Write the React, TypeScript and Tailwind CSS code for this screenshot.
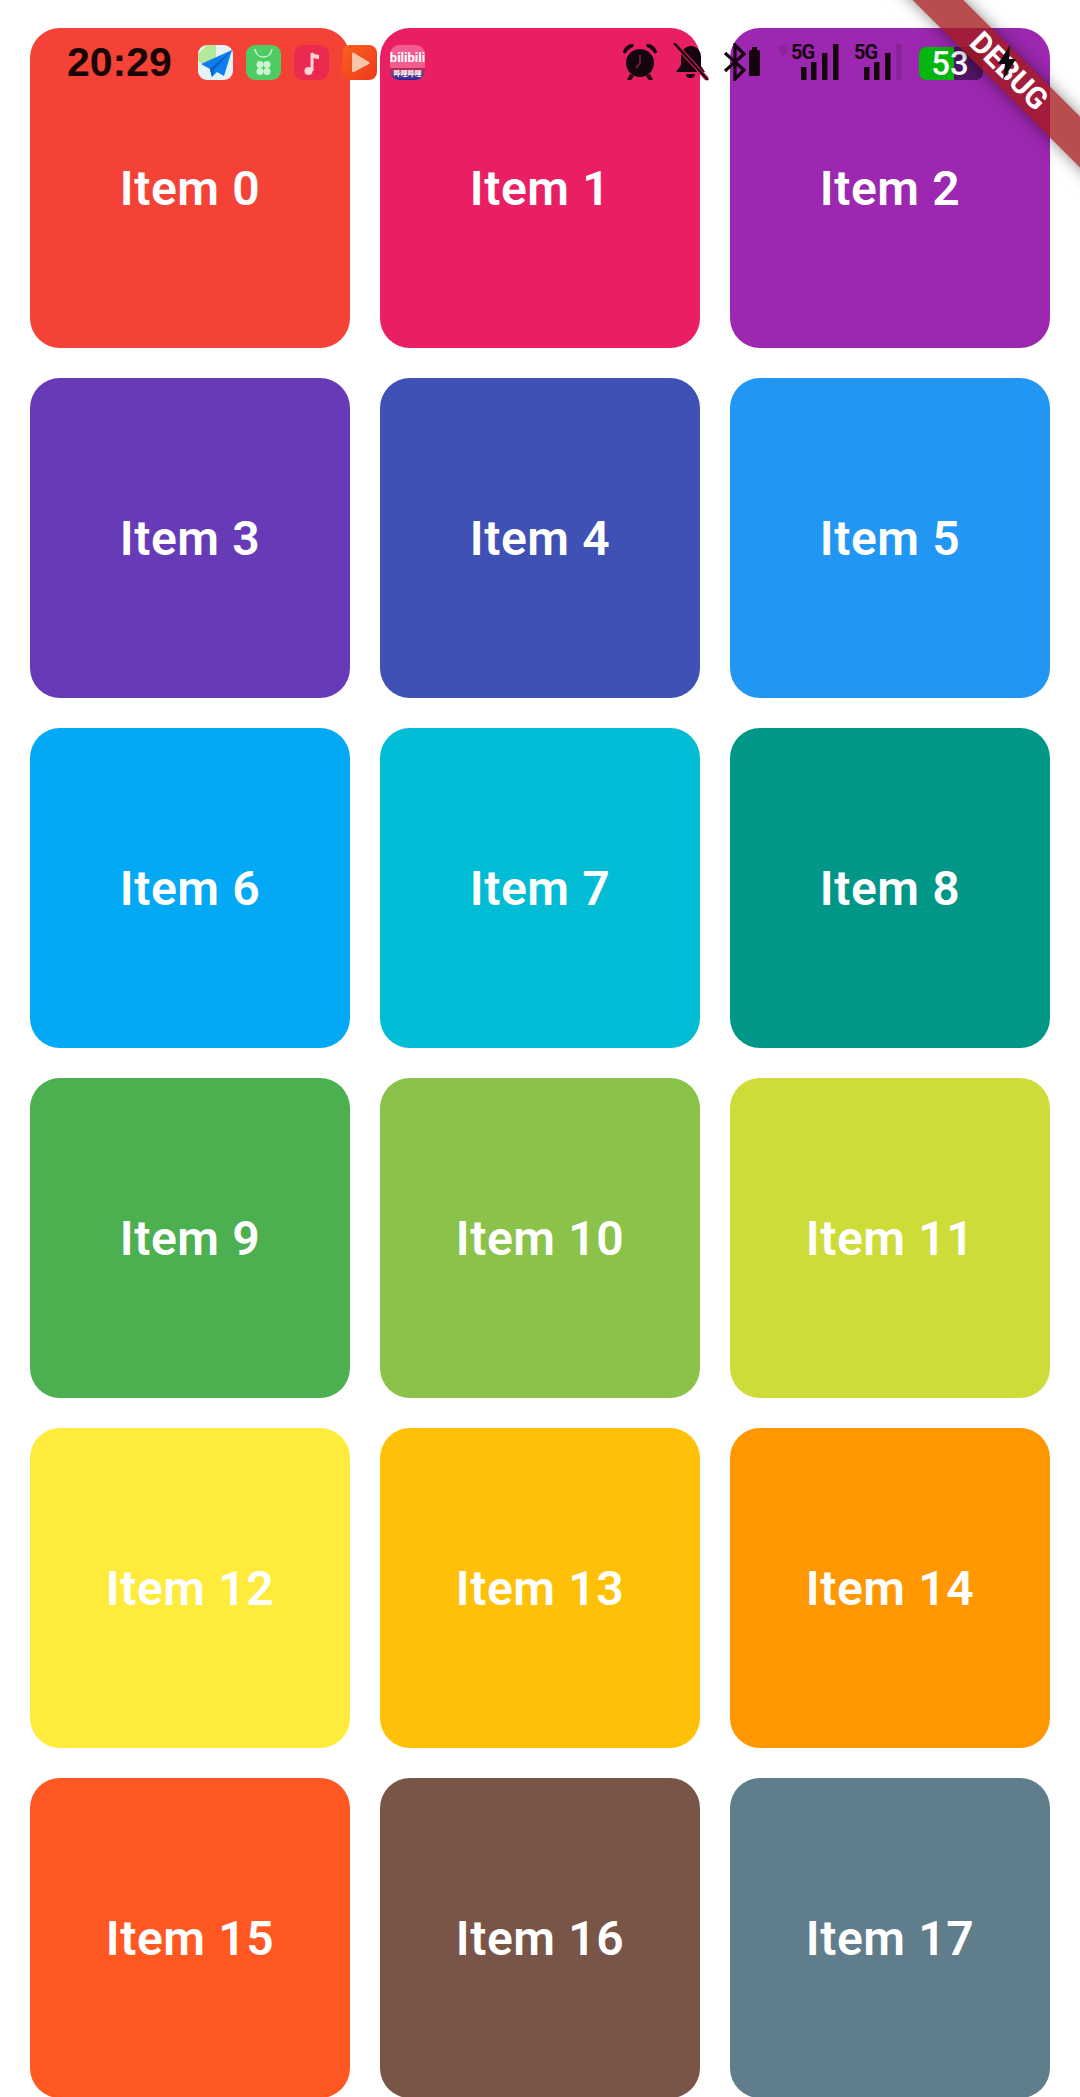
import React from 'react';

const items = [
  'bg-[#f44336]', 'bg-[#e91e63]', 'bg-[#9c27b0]',
  'bg-[#673ab7]', 'bg-[#3f51b5]', 'bg-[#2196f3]',
  'bg-[#03a9f4]', 'bg-[#00bcd4]', 'bg-[#009688]',
  'bg-[#4caf50]', 'bg-[#8bc34a]', 'bg-[#cddc39]',
  'bg-[#ffeb3b]', 'bg-[#ffc107]', 'bg-[#ff9800]',
  'bg-[#ff5722]', 'bg-[#795548]', 'bg-[#607d8b]',
];

const ink = '#16040f';

function MapsIcon() {
  return (
    <svg width="35" height="35" viewBox="0 0 35 35">
      <rect width="35" height="35" rx="9" fill="#e4f3f6" />
      <path d="M0 9 9 0h9v14L6 20 0 16z" fill="#b5e89a" />
      <path d="M34 5 3 19l9 5 2 8 5-5 7 4z" fill="#0f7ff0" />
      <path d="M34 5 12 24l2 8 2-7z" fill="#0a5fc4" />
    </svg>
  );
}

function StoreIcon() {
  return (
    <svg width="35" height="35" viewBox="0 0 35 35">
      <rect width="35" height="35" rx="9" fill="#4fcb63" />
      <path d="M9 4c1 6 4 8 8.500 8S25 10 26 4" fill="none" stroke="#c9f5cf" strokeWidth="1.500" />
      <circle cx="14" cy="19.500" r="3.500" fill="#c9f5cf" />
      <circle cx="21" cy="19.500" r="3.500" fill="#c9f5cf" />
      <circle cx="14" cy="26.500" r="3.500" fill="#c9f5cf" />
      <circle cx="21" cy="26.500" r="3.500" fill="#c9f5cf" />
    </svg>
  );
}

function MusicIcon() {
  return (
    <svg width="35" height="35" viewBox="0 0 35 35">
      <rect width="35" height="35" rx="9" fill="#ea2a50" />
      <path d="M18 8v18" stroke="#ffd5d8" strokeWidth="3" />
      <path d="M18 7c2 3 5 2 7 3v4c-3 0-5-1-7-2z" fill="#ffd5d8" />
      <circle cx="14.500" cy="26" r="4" fill="#ffd5d8" />
    </svg>
  );
}

function VideoIcon() {
  return (
    <svg width="35" height="35" viewBox="0 0 35 35">
      <defs>
        <linearGradient id="videoBg" x1="0" y1="0" x2="1" y2="1">
          <stop offset="0" stopColor="#f8601f" />
          <stop offset="1" stopColor="#ee3a1c" />
        </linearGradient>
      </defs>
      <rect width="35" height="35" rx="8" fill="url(#videoBg)" />
      <path d="M10 9c0-1 1-2 2-1l15 9c1 .5 1 1.500 0 2l-15 8c-1 .5-2 0-2-1z" fill="#fcc4a8" />
    </svg>
  );
}

function BiliIcon() {
  return (
    <div className="relative flex h-[35px] w-[35px] flex-col items-center overflow-hidden rounded-[9px] bg-[#f25d8e]">
      <span className="mt-[6px] text-[13px] leading-[14px] font-bold text-white font-['Roboto',sans-serif]">bilibili</span>
      <div className="absolute right-0 bottom-0 left-0 flex h-[12px] items-center justify-center bg-gradient-to-b from-[#c81f50] to-[#2020a0]">
        <span className="text-[7px] leading-none font-bold text-white font-['Noto_Sans_CJK_SC',sans-serif]">哔哩哔哩</span>
      </div>
    </div>
  );
}

function AlarmIcon() {
  return (
    <svg width="36" height="38" viewBox="0 0 36 38">
      <circle cx="18" cy="20" r="14" fill={ink} />
      <path d="M18 12v8l-4 5" fill="none" stroke="#8c1c40" strokeWidth="1.500" />
      <path d="M1 9c1-5 5-8 10-8 1 0 1 2 0 3-3 1-6 4-7 6-1 1-3 0-3-1zM35 9c-1-5-5-8-10-8-1 0-1 2 0 3 3 1 6 4 7 6 1 1 3 0 3-1z" fill={ink} />
      <path d="M8 31 5 37h4l3-4zM28 31l3 6h-4l-3-4z" fill={ink} />
    </svg>
  );
}

function BellOffIcon() {
  return (
    <svg width="36" height="38" viewBox="0 0 36 38">
      <path d="M18 3c6 0 10 5 10 11v9l4 6H3l5-7v-8c0-6 4-11 10-11z" fill={ink} />
      <path d="M13 31h9c0 3-2 4-4.500 4S13 34 13 31z" fill={ink} />
      <path d="m2 1 32 35" stroke="#e91e63" strokeWidth="4.500" />
      <path d="m1 0 34 37" stroke={ink} strokeWidth="2.500" />
    </svg>
  );
}

function BluetoothIcon() {
  return (
    <svg width="38" height="38" viewBox="0 0 38 38">
      <path d="m2 10 19 17-9 9V2l9 9L2 28" fill="none" stroke={ink} strokeWidth="3.200" />
      <rect x="26" y="7" width="11" height="26" rx="1.500" fill={ink} />
      <rect x="29" y="4" width="5" height="4" fill={ink} />
    </svg>
  );
}

function DataDot() {
  return (
    <svg width="9" height="38" viewBox="0 0 9 38">
      <path d="M4.500 1 9 4v5l-4.500 4L0 9V4z" fill={ink} opacity="0.12" />
    </svg>
  );
}

function SignalIcon({ lastFaint }: { lastFaint?: boolean }) {
  return (
    <div className="relative h-[38px] w-[48px]">
      <svg width="48" height="38" viewBox="0 0 48 38">
        <rect x="10" y="24" width="5.500" height="13" fill={ink} />
        <rect x="20" y="19" width="5.500" height="18" fill={ink} />
        <rect x="31" y="10" width="5.500" height="27" fill={ink} />
        <rect x="42" y="1" width="5.500" height="36" fill={ink} opacity={lastFaint ? 0.15 : 1} />
      </svg>
      <span className="absolute top-[-1px] left-0 text-[20px] leading-[20px] font-bold tracking-[-1px] text-[#16040f]">5G</span>
    </div>
  );
}

function StatusBar() {
  return (
    <div className="absolute top-[43px] right-0 left-0 flex h-[38px] items-center pl-[67px] font-['Roboto',sans-serif]">
      <span className="w-[105px] text-[41px] leading-[38px] font-bold text-[#1a0506] font-['Liberation_Sans',sans-serif]">20:29</span>
      <div className="ml-[26px] flex gap-[13px]">
        <MapsIcon />
        <StoreIcon />
        <MusicIcon />
        <VideoIcon />
        <BiliIcon />
      </div>
      <div className="ml-[197px] flex items-center">
        <AlarmIcon />
        <div className="ml-[15px]"><BellOffIcon /></div>
        <div className="ml-[14px]"><BluetoothIcon /></div>
        <div className="ml-[18px]"><DataDot /></div>
        <div className="ml-[3px]"><SignalIcon /></div>
        <div className="ml-[15px]"><SignalIcon lastFaint /></div>
        <div className="relative ml-[17px] mt-[3px] flex h-[33px] w-[64px] rounded-[7px] bg-[#3d1050]/80">
          <div className="h-full w-[35px] rounded-l-[7px] bg-[#05b510]" />
          <span className="absolute inset-0 flex items-center justify-center pr-[2px] text-[33px] leading-none font-medium text-white">53</span>
        </div>
      </div>
    </div>
  );
}

function DebugBanner() {
  return (
    <div className="absolute top-[53px] left-[859px] flex h-[36px] w-[300px] rotate-45 items-center justify-center bg-[#a51a1a]/[0.78] shadow-[0_0_16px_rgba(0,0,0,0.45)]">
      <span className="text-[30px] leading-none font-bold text-white font-['Roboto',sans-serif]">DEBUG</span>
    </div>
  );
}

export default function App() {
  return (
    <div className="relative h-[2097px] w-[1080px] overflow-hidden bg-white">
      <div className="grid grid-cols-3 gap-[30px] px-[30px] pt-[28px]">
        {items.map((bg, i) => (
          <div key={i} className={`flex h-[320px] items-center justify-center rounded-[30px] pt-[2px] ${bg}`}>
            <span className="text-[48px] leading-none font-semibold tracking-[0.6px] text-white font-['Roboto',sans-serif]">Item {i}</span>
          </div>
        ))}
      </div>
      <StatusBar />
      <DebugBanner />
      <svg width="20" height="35" viewBox="0 0 20 35" className="absolute top-[45px] left-[997px]">
        <path d="M13 0 1 19h7L6 35l13-21h-7z" fill="#0d0d0d" />
      </svg>
    </div>
  );
}
